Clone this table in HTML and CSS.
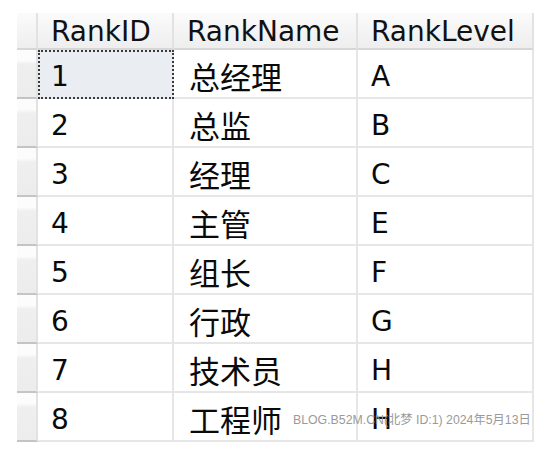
FILE: index.html
```html
<!DOCTYPE html>
<html lang="zh">
<head>
<meta charset="utf-8">
<title>Rank</title>
<link rel="stylesheet" href="styles.css">
</head>
<body>
<div class="page">
  <div class="grid">
    <div class="hd rowhd"></div>
    <div class="hd">RankID</div>
    <div class="hd">RankName</div>
    <div class="hd">RankLevel</div>

    <div class="rowhd"></div><div class="cell num sel">1</div><div class="cell cjk">总经理</div><div class="cell">A</div>
    <div class="rowhd"></div><div class="cell num">2</div><div class="cell cjk">总监</div><div class="cell">B</div>
    <div class="rowhd"></div><div class="cell num">3</div><div class="cell cjk">经理</div><div class="cell">C</div>
    <div class="rowhd"></div><div class="cell num">4</div><div class="cell cjk">主管</div><div class="cell">E</div>
    <div class="rowhd"></div><div class="cell num">5</div><div class="cell cjk">组长</div><div class="cell">F</div>
    <div class="rowhd"></div><div class="cell num">6</div><div class="cell cjk">行政</div><div class="cell">G</div>
    <div class="rowhd"></div><div class="cell num">7</div><div class="cell cjk">技术员</div><div class="cell">H</div>
    <div class="rowhd"></div><div class="cell num">8</div><div class="cell cjk">工程师</div><div class="cell">H</div>
  </div>
  <div class="watermark">BLOG.B52M.CN(北梦 ID:1) 2024年5月13日</div>
</div>
</body>
</html>
```

FILE: styles.css
```css
html, body {
  margin: 0;
  padding: 0;
  background: #ffffff;
}

.page {
  position: relative;
  width: 540px;
  height: 452px;
  padding: 13px 0 0 17px;
  box-sizing: border-box;
  font-family: "DejaVu Sans", "Liberation Sans", sans-serif;
  color: #0a0a0a;
}

.grid {
  display: grid;
  grid-template-columns: 21px 136px 184px 176px;
  grid-template-rows: 37px repeat(8, 49px);
}

.grid > div {
  box-sizing: border-box;
}

.hd {
  background: linear-gradient(to bottom, #fbfbfb 0%, #f3f3f3 60%, #eeeeee 100%);
  border-right: 2px solid #e2e2e2;
  border-bottom: 2px solid #d6d6d6;
  font-size: 28px;
  line-height: 36px;
  padding-left: 13px;
  padding-top: 1px;
  white-space: nowrap;
  overflow: hidden;
  color: #111111;
}

.rowhd {
  background: linear-gradient(to bottom, #fcfcfc 0%, #fcfcfc 22%, #efefef 30%, #ececec 100%);
  border-right: 2px solid #e2e2e2;
  border-bottom: 2px solid #c4c4c4;
}

.hd.rowhd {
  background: linear-gradient(to bottom, #fbfbfb 0%, #f3f3f3 60%, #eeeeee 100%);
  border-bottom: 2px solid #d6d6d6;
}

.cell {
  background: #ffffff;
  border-right: 2px solid #e6e6e6;
  border-bottom: 2px solid #e6e6e6;
  font-size: 28px;
  line-height: 46px;
  padding-left: 13px;
  padding-top: 4px;
  white-space: nowrap;
  color: #0a0a0a;
}

.cjk {
  font-family: "Noto Sans CJK SC", sans-serif;
  font-size: 31px;
  line-height: 44px;
  padding-left: 15px;
  padding-top: 4px;
}

.sel {
  background: #eaedf1;
  border: 2px dotted #3a3a3a;
  padding-left: 11px;
  line-height: 42px;
  padding-top: 4px;
}

.watermark {
  position: absolute;
  left: 293px;
  top: 410px;
  font-family: "Liberation Sans", "Noto Sans CJK SC", sans-serif;
  font-size: 12.3px;
  color: #9a9a9a;
  white-space: nowrap;
}
```
